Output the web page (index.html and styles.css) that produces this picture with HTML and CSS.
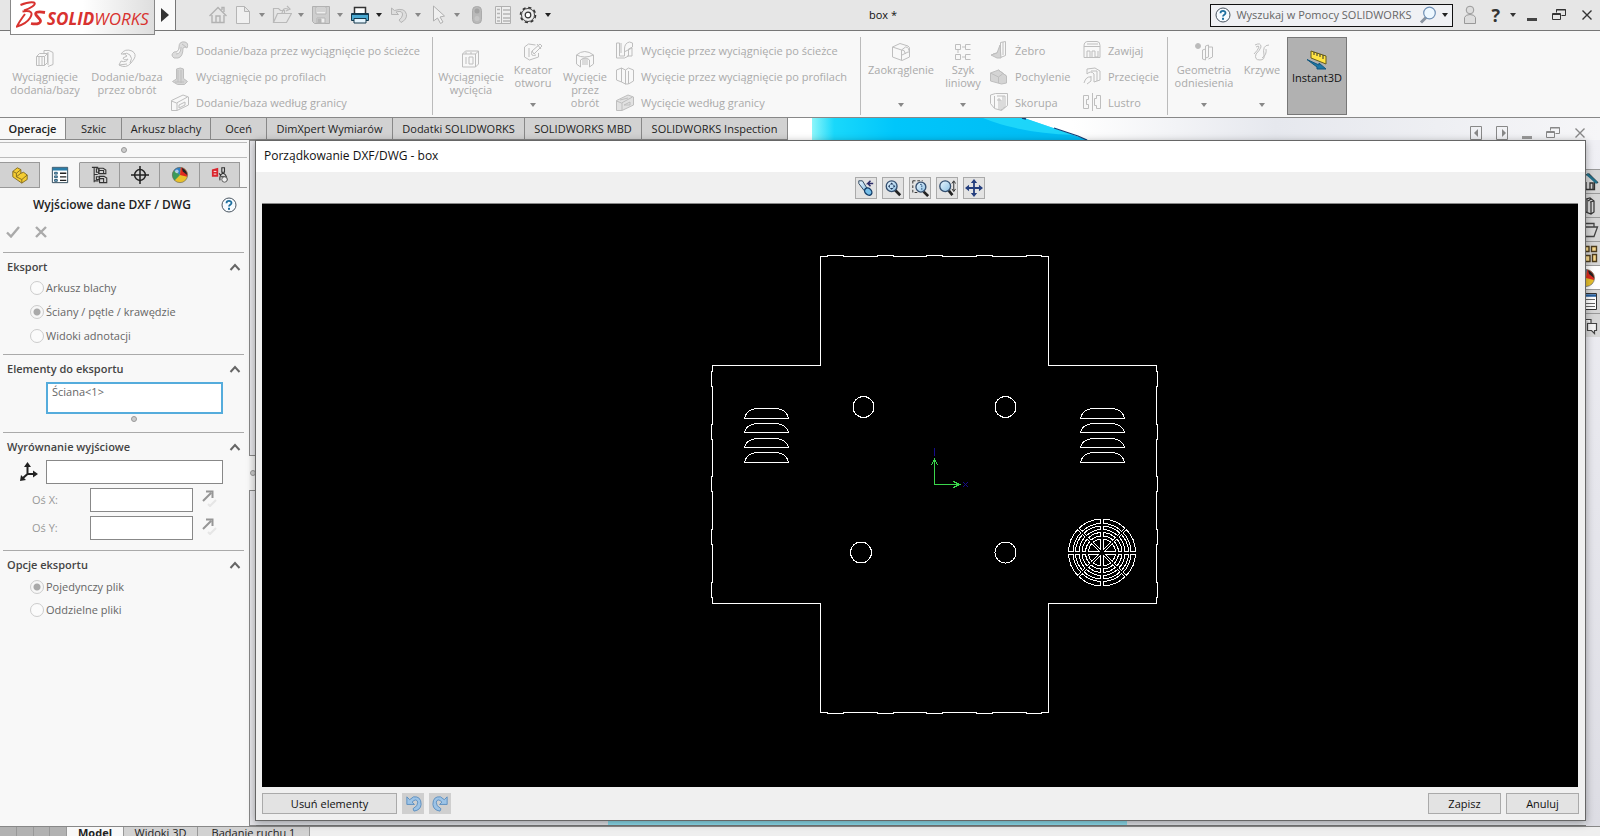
FILE: index.html
```html
<!DOCTYPE html>
<html lang="pl">
<head>
<meta charset="utf-8">
<title>SOLIDWORKS - box</title>
<link rel="stylesheet" href="styles.css">
</head>
<body>
<svg class="defs" aria-hidden="true">
  <defs>
    <linearGradient id="steel" x1="0" y1="0" x2="1" y2="1"><stop offset="0" stop-color="#eaf6ff"/><stop offset="1" stop-color="#8cc0e4"/></linearGradient>
    <symbol id="caret" viewBox="0 0 6 4"><path d="M0 0h6L3 4z" fill="currentColor"/></symbol>
    <symbol id="chevron" viewBox="0 0 12 8"><path d="M1.500 7L6 2l4.500 5" fill="none" stroke="#666" stroke-width="2"/></symbol>
    <symbol id="help" viewBox="0 0 16 16"><circle cx="8" cy="8" r="7" fill="#f6fbff" stroke="#4a5560"/><path d="M5.500 6.200C5.500 3.200 10.600 3.200 10.500 6c0 1.800-2.500 1.800-2.500 3.600" fill="none" stroke="#1d6f9f" stroke-width="1.800"/><rect x="7" y="10.800" width="2" height="2" fill="#1d6f9f"/></symbol>
    <symbol id="restore" viewBox="0 0 14 12"><path d="M4.500 3.500v-3h9v6h-4M4 1h10" fill="none" stroke="currentColor"/><path d="M.5 4.500h8v6h-8zM.5 5.500h8" fill="none" stroke="currentColor"/></symbol>
    <symbol id="cross" viewBox="0 0 12 12"><path d="M1.500 1.500l9 9M10.500 1.500l-9 9" fill="none" stroke="currentColor" stroke-width="1.400"/></symbol>
    <symbol id="sphere" viewBox="0 0 20 20"><circle cx="10" cy="10" r="8.500" fill="#e8c12c"/><path d="M10 10L4 16A8.500 8.500 0 0 1 3 5z" fill="#3b9a5a"/><path d="M10 10L3 5a8.500 8.500 0 0 1 8-3.500z" fill="#2d7ec4"/><path d="M10 10l1-8.500A8.500 8.500 0 0 1 18 12z" fill="#e02a20"/><path d="M12 2q6 3 6 8l-5-4z" fill="#222"/><circle cx="10" cy="10" r="8.500" fill="none" stroke="#666" stroke-width=".7"/><circle cx="6.500" cy="6" r="2" fill="#fff" opacity=".6"/></symbol>
    <symbol id="flip" viewBox="0 0 16 18"><path d="M1 12L9 4M4 2.500h6.500V9" fill="none" stroke="#969696" stroke-width="2"/><path d="M6 15l2 2 6-6" fill="none" stroke="#e6e6e6" stroke-width="2"/></symbol>
  </defs>
</svg>

<header class="titlebar">
  <div class="logo">
    <svg width="30" height="28" viewBox="0 0 30 28" aria-hidden="true"><path d="M4.500 4Q13 .500 18 1.500C21 3.500 14 7.500 8 9.500M6.500 10.500C15 9 17.500 11.500 14 17 11.500 21 6 24 1 25.500 3 21 6 17 9 13" fill="none" stroke="#d8322f" stroke-width="2"/><path d="M29 11.500c-8-1.500-11 0-8.500 3l3.500 4c2 3-2 5.500-9 4" fill="none" stroke="#d8322f" stroke-width="2.800"/></svg>
    <span class="word"><b>SOLID</b>WORKS</span>
  </div>
  <button class="expand" aria-label="Menu"><svg width="8" height="14" viewBox="0 0 8 14"><path d="M0 0l8 7-8 7z" fill="#333"/></svg></button>
  <nav class="quick" aria-label="Szybki dostęp">
    <button class="q home" aria-label="Strona główna"><svg width="20" height="20" viewBox="0 0 20 20"><path d="M1.500 11L10 2.500l8.500 8.500M4 10v7.500h12V10M8 17.500V11h4v6.500M14 5V2.500h2V7" fill="none" stroke="#b2b2b2" stroke-width="1.400"/></svg></button>
    <button class="q drop" aria-label="Nowy"><svg width="20" height="20" viewBox="0 0 20 20"><path d="M3.500 1.500h8l5 5v12h-13zM11.500 1.500v5h5" fill="#f0f0f0" stroke="#b5b5b5"/></svg><svg class="caret" aria-hidden="true"><use href="#caret"/></svg></button>
    <button class="q drop" aria-label="Otwórz"><svg width="20" height="20" viewBox="0 0 20 20"><path d="M1.500 17V3.500h5l2 2h4v3M1.500 17.500l4-9h14l-5 9zM10 8q1-6 6-4M15 1l3 3-4 2" fill="none" stroke="#b9b9b9" stroke-width="1.200"/></svg><svg class="caret" aria-hidden="true"><use href="#caret"/></svg></button>
    <button class="q drop" aria-label="Zapisz dokument"><svg width="20" height="20" viewBox="0 0 20 20"><path d="M1.500 1.500h17v17h-15l-2-2z" fill="#cecece" stroke="#b0b0b0"/><path d="M5 2h10v7H5zM6 13h8v5H6z" fill="#eee" stroke="#b5b5b5"/><path d="M6 4h8M6 6h8M7 14h3v4H7z" stroke="#b5b5b5" fill="#b5b5b5"/></svg><svg class="caret" aria-hidden="true"><use href="#caret"/></svg></button>
    <button class="q drop on" aria-label="Drukuj"><svg width="20" height="20" viewBox="0 0 20 20"><path d="M4.500 8V2.500h11V8" fill="#fff" stroke="#333" stroke-width="1.500"/><path d="M1.500 8.500h17v7h-17z" fill="#4aa9d1" stroke="#14394c"/><path d="M4 13.500h12v4.500H4z" fill="#e5f4fc" stroke="#14394c"/><path d="M2 9.500h16" stroke="#123f59"/></svg><svg class="caret" aria-hidden="true"><use href="#caret"/></svg></button>
    <button class="q drop" aria-label="Cofnij"><svg width="20" height="20" viewBox="0 0 20 20"><path d="M2.500 3v6.500h7L7 7q7-2 6.500 3-.5 3-3.500 5l2 2.500q6-3 5.500-8Q16 2 5.500 5.500z" fill="#ddd" stroke="#b5b5b5"/></svg><svg class="caret" aria-hidden="true"><use href="#caret"/></svg></button>
    <button class="q drop" aria-label="Wybierz"><svg width="20" height="20" viewBox="0 0 20 20"><path d="M5.500 1v15l4-3 3 5.500 2.500-1.500-3-5 4.500-1z" fill="#f0f0f0" stroke="#b0b0b0"/></svg><svg class="caret" aria-hidden="true"><use href="#caret"/></svg></button>
    <button class="q" aria-label="Przebuduj"><svg width="20" height="20" viewBox="0 0 20 20"><rect x="5.500" y="1.500" width="9" height="17" rx="4" fill="#b9b9b9" stroke="#ababab"/><circle cx="10" cy="6" r="2.500" fill="#a2a2a2"/><circle cx="10" cy="13.500" r="2.500" fill="#c6c6c6"/></svg></button>
    <button class="q list" aria-label="Właściwości pliku"><svg width="20" height="20" viewBox="0 0 20 20"><path d="M2.500 1.500h15v17h-15zM8.500 2v16" fill="#eee" stroke="#b0b0b0"/><path d="M4 4.500h3M4 8.500h3M4 12.500h3M4 16h3M10 5h7M10 9h7M10 13h7M10 16h7" stroke="#b5b5b5" stroke-width="1.500"/></svg></button>
    <button class="q drop on gear" aria-label="Opcje"><svg width="20" height="20" viewBox="0 0 20 20"><circle cx="10" cy="10" r="7.500" fill="none" stroke="#333" stroke-width="1.600" stroke-dasharray="3.200 2.690"/><circle cx="10" cy="10" r="6.500" fill="#eee" stroke="#444"/><circle cx="10" cy="10" r="2.800" fill="#fff" stroke="#333" stroke-width="1.200"/></svg><svg class="caret" aria-hidden="true"><use href="#caret"/></svg></button>
  </nav>
  <span class="doc">box *</span>
  <div class="search">
    <svg width="16" height="16" aria-hidden="true"><use href="#help"/></svg>
    <input type="text" placeholder="Wyszukaj w Pomocy SOLIDWORKS" aria-label="Wyszukaj w Pomocy SOLIDWORKS">
    <button aria-label="Szukaj"><svg width="18" height="18" viewBox="0 0 18 18"><path d="M7.500 11L2 16.500" stroke="#8a94a0" stroke-width="3"/><circle cx="10.500" cy="7" r="5.800" fill="#eef8ff" stroke="#6f90b5" stroke-width="1.200"/></svg></button>
    <svg class="caret dark" aria-hidden="true"><use href="#caret"/></svg>
  </div>
  <div class="winctl">
    <button aria-label="Logowanie"><svg width="14" height="20" viewBox="0 0 14 20"><circle cx="7" cy="5" r="3.800" fill="#ddd" stroke="#999"/><path d="M1.500 18.500v-6q1-3 5.500-3t5.500 3v6z" fill="#ddd" stroke="#999"/></svg></button>
    <button class="qm" aria-label="Pomoc">?<svg class="caret" aria-hidden="true"><use href="#caret"/></svg></button>
    <button aria-label="Minimalizuj"><svg width="10" height="12" viewBox="0 0 10 12"><path d="M0 10.500h10" stroke="#444" stroke-width="3"/></svg></button>
    <button aria-label="Przywróć"><svg width="14" height="12"><use href="#restore"/></svg></button>
    <button aria-label="Zamknij"><svg width="12" height="12"><use href="#cross"/></svg></button>
  </div>
</header>

<section class="ribbon" aria-label="Wstążka">
  <div class="group g1">
    <button class="big w84 low"><svg viewBox="0 0 20 20"><path d="M1.500 7.500h8v9h-8zM9.500 7.500l3-3v9l-3 3M1.500 7.500l3-3h8M9 4.500V1.500h5l4 2v12l-5 2M13 3v13M4 8v8M7 8v8"/></svg><span>Wyciągnięcie<br>dodania/bazy</span></button>
    <button class="big w80 low"><svg viewBox="0 0 20 20"><path d="M4 5q4-6 11-3 5 3 2 8l-3 4q-5 6-12 2l2-4q5 2 7-2-4 2-5-1l4-2q-2-3-6-2M6 5q4-2 7 1t0 8M2 16l8-1"/></svg><span>Dodanie/baza<br>przez obrót</span></button>
    <div class="stack s1">
      <button><svg viewBox="0 0 20 20"><path d="M4 18q-4-3 0-6 5 0 5-5Q9 1 15 2q4 1 2 6-2-2-4 0 0 9-5 10zM6 14q5 0 5-7M12 4l4 3" fill="#dcdcdc"/></svg>Dodanie/baza przez wyciągnięcie po ścieżce</button>
      <button><svg viewBox="0 0 20 20"><path d="M6.500 3v10l-4 2.500 5 3h7l3-3-4-3V3q-3-2-7 0z" fill="#d4d4d4"/><path d="M8 4v12M11 4v13M5 16h9"/></svg>Wyciągnięcie po profilach</button>
      <button><svg viewBox="0 0 20 20"><path d="M1.500 8.500L13 3l5.500 2v8L7 18.500H1.500zM1.500 9l5 2 11-6M7 11v7M9 13l6-3v3l-6 3z"/></svg>Dodanie/baza według granicy</button>
    </div>
  </div>
  <div class="group g2">
    <button class="big w76 low"><svg viewBox="0 0 20 20"><path d="M1.500 5l3-3h13v13l-3 3h-13zM1.500 5h13v13M14.500 5l3-3M5 8v7M8 8h4v7H8zM5 3v2M10 3v2"/></svg><span>Wyciągnięcie<br>wycięcia</span></button>
    <button class="big w48"><svg viewBox="0 0 20 20"><path d="M1.500 5l4-3 7 1M1.500 5v10l5 3 9-3v-4M6 6v9M9 9l8-7 2 2-8 8zM9 9q-2 6 4 4M14 2l4 5"/></svg><span>Kreator<br>otworu</span><svg class="caret" aria-hidden="true"><use href="#caret"/></svg></button>
    <button class="big w56 low"><svg viewBox="0 0 20 20"><path d="M1.500 6q8-7 17 0v9l-4 3v-7q-4-4-9 0v7l-4-3zM1.500 6q8 4 17 0M8 10v6M12 10v6M10 9v7"/></svg><span>Wycięcie<br>przez<br>obrót</span></button>
    <div class="stack s2">
      <button><svg viewBox="0 0 20 20"><path d="M1.500 3h3v13h5V9q0-6 5-7l3 1v4l-4 2v7l-4 2h-8zM6 3v10M9 12l8-4v8h-5"/></svg>Wycięcie przez wyciągnięcie po ścieżce</button>
      <button><svg viewBox="0 0 20 20"><path d="M1.500 4l5-2 4 2 3-2 5 2v11l-5 3V5M6.500 2v14l-5-2V4M6.500 16l4 2V4M13 18h-3"/></svg>Wycięcie przez wyciągnięcie po profilach</button>
      <button><svg viewBox="0 0 20 20"><path d="M1.500 8.500L13 3l5.500 2v8L7 18.500H1.500z" fill="#e2e2e2"/><path d="M1.500 9l5 2 11-6M7 11v7M9 13l6-3v3zM5 8l8-2"/></svg>Wycięcie według granicy</button>
    </div>
  </div>
  <div class="group g3">
    <button class="big w80"><svg viewBox="0 0 20 20"><path d="M1.500 5L9 1.500l8 2.500q2 1 1.500 4v7L11 18.500 1.500 15zM1.500 5l9 3v10M10.500 8l4-3q4 0 3.500 6M11 13l6-3M10.500 8q3-1 4 4"/></svg><span>Zaokrąglenie</span><svg class="caret" aria-hidden="true"><use href="#caret"/></svg></button>
    <button class="big w44"><svg viewBox="0 0 20 20"><path d="M2.500 2.500h5v5h-5zM12.500 2.500h5M17.500 7.500h-5v-5M2.500 12.500h5v5h-5zM17.500 17.500h-5v-5h5M9 5h3M9 15h3M5 8v3"/></svg><span>Szyk<br>liniowy</span><svg class="caret" aria-hidden="true"><use href="#caret"/></svg></button>
    <div class="stack s3">
      <button><svg viewBox="0 0 20 20"><path d="M11.500 2.500l5-1v14l-5 2zM14 2v13M4 14l7-2"/><path d="M11 5l-3 8-6 2 6 3h4z" fill="#d4d4d4"/></svg>Żebro</button>
      <button><svg viewBox="0 0 20 20"><path d="M1.500 7l8-3 8 6v7l-5 1-11-3z" fill="#d4d4d4"/><path d="M1.500 7l8 4v6M9.500 11l4-3M9.500 4l8 6"/></svg>Pochylenie</button>
      <button><svg viewBox="0 0 20 20"><path d="M1.500 3l5-1.500h12v12l-6 5-7-2-4-5zM5.500 4v12M8 4h8v11l-4 3V8H8M10 6v12M14 4v12"/></svg>Skorupa</button>
    </div>
    <div class="stack s4">
      <button><svg viewBox="0 0 20 20"><path d="M2 6q0-4.500 4-4.500h9q3 0 3 4v12H2zM2 6.500h16M5 17v-6h3v6M10 17v-6h3v6h3v-6M5 4h11"/></svg>Zawijaj</button>
      <button><svg viewBox="0 0 20 20"><path d="M5 8V3l8-1 5 3v9l-6 2V8q-3-4-7 0zM2 17q2-7 7-6M5 18l4-3v-5M9 5h6v10"/></svg>Przecięcie</button>
      <button><svg viewBox="0 0 20 20"><path d="M10.500 1v18M1.500 3.500h5v4M1.500 3.500v13h5v-4h-2v-5h2M18.500 3.500h-4v3h-2v7h2v3h4z"/></svg>Lustro</button>
    </div>
  </div>
  <div class="group g4">
    <button class="big w72"><svg viewBox="0 0 20 20"><circle cx="4" cy="4" r="2.500" fill="#bbb"/><path d="M8.500 8v9l3 1V7zM11.500 4v12l3-1V3zM14.500 5h4v10l-4 2"/></svg><span>Geometria<br>odniesienia</span><svg class="caret" aria-hidden="true"><use href="#caret"/></svg></button>
    <button class="big w44"><svg viewBox="0 0 20 20"><path d="M3 3q6-3 6 2-1 3-5 7-2 6 4 6 5 0 4-5Q10 3 17 3M4 5q3-2 3 0-1 3-5 7M10 16q5-3 4-9"/></svg><span>Krzywe</span><svg class="caret" aria-hidden="true"><use href="#caret"/></svg></button>
    <button class="big instant low" aria-pressed="true"><svg class="color" viewBox="0 0 22 20"><path d="M5 1l15 5v8L5 8z" fill="#ffe443" stroke="#665d18"/><path d="M8 2v3M11 3v3M14 4v3M17 5v4" stroke="#333"/><path d="M1 9.500l12 5.500v-2l7 6-9 0v-2z" fill="#1c77a6" stroke="#12577f"/></svg><span>Instant3D</span></button>
  </div>
</section>

<div class="tabrow">
  <nav class="tabs" aria-label="Karty">
    <button class="active t1">Operacje</button><button class="t2">Szkic</button><button class="t3">Arkusz blachy</button><button class="t2">Oceń</button><button class="t4">DimXpert Wymiarów</button><button class="t5">Dodatki SOLIDWORKS</button><button class="t6">SOLIDWORKS MBD</button><button class="t7">SOLIDWORKS Inspection</button>
  </nav>
  <div class="modelstrip">
    <svg class="modeledge" width="300" height="22" viewBox="0 0 300 22" aria-hidden="true"><defs><linearGradient id="cy"><stop offset="0" stop-color="#8df6fa"/><stop offset=".08" stop-color="#19d8fb"/><stop offset=".3" stop-color="#00c6fb"/><stop offset="1" stop-color="#00b9f2"/></linearGradient></defs><path d="M24 0h212l64 22H24z" fill="url(#cy)"/><path d="M195 0h41l50 17q-55-2-91-17z" fill="#29dffc" opacity=".7"/><path d="M234 0l4 1M266 10l24 8M290 18l9 4" stroke="#123f78" fill="none" stroke-width="1.300"/></svg>
    <div class="docctl">
      <button aria-label="Poprzednie okno"><svg width="12" height="14" viewBox="0 0 12 14"><path d="M.5.500h11v13H.5z" fill="none" stroke="#888"/><path d="M8 3v8L4 7z" fill="#888"/></svg></button>
      <button aria-label="Następne okno"><svg width="12" height="14" viewBox="0 0 12 14"><path d="M.5.500h11v13H.5z" fill="none" stroke="#888"/><path d="M6 3v8l4-4z" fill="#888"/></svg></button>
      <button aria-label="Minimalizuj dokument"><svg width="10" height="12" viewBox="0 0 10 12"><path d="M0 10.500h10" stroke="#999" stroke-width="3"/></svg></button>
      <button aria-label="Przywróć dokument"><svg width="14" height="12"><use href="#restore"/></svg></button>
      <button aria-label="Zamknij dokument"><svg width="12" height="12"><use href="#cross"/></svg></button>
    </div>
  </div>
</div>

<main class="work">
  <aside class="panel">
    <div class="grip"><i></i></div>
    <nav class="ptabs" aria-label="Menedżer">
      <button aria-label="Drzewo operacji"><svg viewBox="0 0 20 20"><path d="M2 6l5-4 4 2v4l3-1 4 3v5l-6 4-10-7z" fill="#f5cd32" stroke="#7f681d"/><path d="M2 6l4 2v4l6 3v4M6 8l5-4M12 15l6-5M11 8l-5 4" fill="none" stroke="#7f681d"/></svg></button>
      <button class="active" aria-label="Menedżer właściwości"><svg viewBox="0 0 20 20"><path d="M1.500 1.500h17v17h-17z" fill="#fff" stroke="#1f3d50"/><path d="M2 3.500h16" stroke="#2b7da8" stroke-width="3"/><path d="M4 7h3v2H4zM4 11h3v2H4zM4 15h3v2H4z" fill="#7fb5d2" stroke="#285570"/><path d="M10 8h7M10 12h7M10 16h7" stroke="#222" stroke-width="1.500"/></svg></button>
      <button aria-label="Konfiguracje"><svg viewBox="0 0 20 20"><path d="M3.500 1v17M1 1.500h7M3.500 9.500h4M3.500 16.500h5M8.500 2.500h5l3 2v4h-8zM9.500 11.500h5l3 2v5h-8zM9 5h5v4M10 14h4v4M6 3h3v4H6zM6 12h3v3H6z" fill="none" stroke="#333" stroke-width="1.200"/></svg></button>
      <button aria-label="DimXpert"><svg viewBox="0 0 20 20"><circle cx="10" cy="10" r="6" fill="none" stroke="#222" stroke-width="1.700"/><path d="M10 0v20M0 10h20" stroke="#222" stroke-width="1.700"/></svg></button>
      <button aria-label="Wyglądy"><svg viewBox="0 0 20 20"><use href="#sphere"/></svg></button>
      <button aria-label="Inspekcja"><svg viewBox="0 0 20 20"><path d="M1 4l7-2v10H1z" fill="#d9252d"/><path d="M3 6h3M3 9h3" stroke="#fff"/><path d="M12 2h3v5h-3zM10 16q-1-6 3-8 4 0 5 8M11 12h5M9 8l2 3" fill="none" stroke="#333" stroke-width="1.200"/><circle cx="15" cy="15" r="3" fill="#eee" stroke="#555"/></svg></button>
    </nav>
    <div class="ptitle"><h1>Wyjściowe dane DXF / DWG</h1><button aria-label="Pomoc"><svg width="16" height="16"><use href="#help"/></svg></button></div>
    <div class="confirm">
      <button aria-label="OK"><svg width="14" height="12" viewBox="0 0 14 12"><path d="M1 6.500l4 4L13 1" fill="none" stroke="#aaa" stroke-width="2.400"/></svg></button>
      <button aria-label="Anuluj operację"><svg width="12" height="12" viewBox="0 0 12 12"><path d="M1 1l10 10M11 1L1 11" stroke="#aaa" stroke-width="2.400"/></svg></button>
    </div>
    <section class="sec export">
      <h2>Eksport <svg width="12" height="8" aria-hidden="true"><use href="#chevron"/></svg></h2>
      <label><input type="radio" name="export" disabled>Arkusz blachy</label>
      <label><input type="radio" name="export" checked disabled>Ściany / pętle / krawędzie</label>
      <label><input type="radio" name="export" disabled>Widoki adnotacji</label>
    </section>
    <section class="sec items">
      <h2>Elementy do eksportu <svg width="12" height="8" aria-hidden="true"><use href="#chevron"/></svg></h2>
      <textarea rows="1" aria-label="Elementy do eksportu">Ściana&lt;1&gt;</textarea>
      <div class="dot"><i></i></div>
    </section>
    <section class="sec align">
      <h2>Wyrównanie wyjściowe <svg width="12" height="8" aria-hidden="true"><use href="#chevron"/></svg></h2>
      <div class="origin"><svg width="18" height="20" viewBox="0 0 18 20" aria-hidden="true"><path d="M7.500 4v8L3 16M7.500 12H14" fill="none" stroke="#222" stroke-width="2"/><path d="M7.500 0l3.500 5H4zM18 12l-5 3.500v-7zM0 19l1-6 5 5z" fill="#222"/></svg><input type="text" aria-label="Układ współrzędnych"></div>
      <div class="axis"><label for="ox">Oś X:</label><input id="ox" type="text"><button aria-label="Odwróć oś X"><svg width="16" height="18"><use href="#flip"/></svg></button></div>
      <div class="axis"><label for="oy">Oś Y:</label><input id="oy" type="text"><button aria-label="Odwróć oś Y"><svg width="16" height="18"><use href="#flip"/></svg></button></div>
    </section>
    <section class="sec options">
      <h2>Opcje eksportu <svg width="12" height="8" aria-hidden="true"><use href="#chevron"/></svg></h2>
      <label><input type="radio" name="files" checked disabled>Pojedynczy plik</label>
      <label><input type="radio" name="files" disabled>Oddzielne pliki</label>
    </section>
  </aside>
  <div class="splitter"><div class="bar top"></div><i></i><div class="bar bottom"></div></div>
  <div class="viewport"><div class="cyanfoot"></div></div>
  <nav class="taskpane" aria-label="Okienko zadań">
    <button aria-label="Zasoby"><svg viewBox="0 0 14 20"><path d="M0 3l3-1 9 9M0 10v7.500h8.500V9M4 17v-6h3v6" fill="none" stroke="#333" stroke-width="1.300"/><path d="M1 2l10 9" stroke="#23708a" stroke-width="2.500"/></svg></button>
    <button aria-label="Biblioteka projektu"><svg viewBox="0 0 14 20"><path d="M0 3l4-1 4 3v11l-3 2-5-2M5 6v12M1 3v14M2 5l3-2M4 6l4-1" fill="none" stroke="#333" stroke-width="1.200"/></svg></button>
    <button aria-label="Eksplorator plików"><svg viewBox="0 0 14 20"><path d="M0 3.500h8v3M0 7h11.500L8 16.500H0M8 4v3" fill="none" stroke="#444" stroke-width="1.300"/></svg></button>
    <button aria-label="Paleta widoków"><svg viewBox="0 0 14 20"><path d="M-1 2.500H3v5h-4zM5.500 2.500h5v5h-5zM-1 11.500h5v6h-5zM6.500 10.500h4v7h-4z" fill="#f5d68b" stroke="#4c3c1d" stroke-width="1.400"/></svg></button>
    <button class="active" aria-label="Wyglądy, sceny i kalkomanie"><svg viewBox="0 0 14 20"><use href="#sphere" x="-10" width="20" height="20"/></svg></button>
    <button aria-label="Właściwości niestandardowe"><svg viewBox="0 0 14 20"><path d="M-1 1.500h11.500v16H-1z" fill="#fff" stroke="#333"/><path d="M0 3.500h10" stroke="#245e9e" stroke-width="2.500"/><path d="M0 7.500h9M0 11.500h9M0 14.500h9" stroke="#666"/></svg></button>
    <button aria-label="Forum"><svg viewBox="0 0 14 20"><path d="M-1 3.500h6v4M1.500 7.500h9v7h-2v3l-3-3h-4z" fill="#f5f5f5" stroke="#444" stroke-width="1.200"/></svg></button>
  </nav>
</main>

<footer class="modeltabs">
  <div class="navarrows"><button aria-label="Pierwsza"></button><button aria-label="Poprzednia"></button><button aria-label="Następna"></button><button aria-label="Ostatnia"></button></div>
  <button class="active">Model</button><button class="v">Widoki 3D</button><button class="r">Badanie ruchu 1</button>
</footer>

<div class="dialog" role="dialog" aria-labelledby="dlg">
  <h2 id="dlg">Porządkowanie DXF/DWG - box</h2>
  <div class="dtools">
    <button aria-label="Odśwież"><svg viewBox="0 0 20 20"><path d="M2 2l4 0 5 8-3 3-6-8z" fill="url(#steel)" stroke="#223b55"/><ellipse cx="12.500" cy="14" rx="4.500" ry="3.500" transform="rotate(45 12.500 14)" fill="#76bee8" stroke="#123c68" stroke-width="1.500"/><path d="M18 5h-6l3-3M12 5l3 3" stroke="#2d2d69" stroke-width="1.700" fill="none"/></svg></button>
    <button aria-label="Dopasuj"><svg viewBox="0 0 20 20"><path d="M12 12l6 6" stroke="#222" stroke-width="3"/><circle cx="8.500" cy="8" r="6" fill="url(#steel)" stroke="#344f70" stroke-width="1.500"/><path d="M8.500 4l2 2h-4zM8.500 12l2-2h-4zM4.500 8l2-2v4zM12.500 8l-2-2v4z" fill="#1d3558"/></svg></button>
    <button aria-label="Powiększ obszar"><svg viewBox="0 0 20 20"><path d="M2 2h11M2 2v13h5" stroke="#222" stroke-dasharray="3 2" fill="none"/><path d="M14 14l5 5" stroke="#222" stroke-width="3"/><circle cx="11" cy="9" r="5.500" fill="url(#steel)" stroke="#344f70" stroke-width="1.500"/><path d="M10 6h2v6" fill="none" stroke="#28507a" stroke-dasharray="2 1"/></svg></button>
    <button aria-label="Powiększ/pomniejsz"><svg viewBox="0 0 20 20"><path d="M12 13l4 5" stroke="#222" stroke-width="3"/><circle cx="8" cy="8" r="6" fill="url(#steel)" stroke="#344f70" stroke-width="1.500"/><path d="M17.500 3v10M15.500 5l2-3 2 3M15.500 11l2 3 2-3" stroke="#222" fill="none"/></svg></button>
    <button aria-label="Przesuń"><svg viewBox="0 0 20 20"><path d="M10 3v14M3 10h14" stroke="#243e7e" stroke-width="2"/><path d="M10 0l3.500 4.500h-7zM10 20l3.500-4.500h-7zM0 10l4.500-3.500v7zM20 10l-4.500-3.500v7z" fill="#243e7e"/></svg></button>
  </div>
  <svg class="drawing" viewBox="262 204 1316 583" role="img" aria-label="Rozwinięcie pudełka">
    <g fill="none" stroke="#fff" shape-rendering="crispEdges">
      <path d="M820.500 256.500h7v-1h16v1h34v-1h16v1h33v-1h16v1h34v-1h16v1h34v-1h15v1h7v109h108v6h1v15h-1v38h1v15h-1v37h1v15h-1v38h1v15h-1v38h1v15h-1v6h-108v109h-7v1h-15v-1h-34v1h-16v-1h-34v1h-16v-1h-33v1h-16v-1h-34v1h-16v-1h-7v-109h-108v-6h-1v-15h1v-38h-1v-15h1v-38h-1v-15h1v-37h-1v-15h1v-38h-1v-15h1v-6h108z"/>
      <circle cx="863.500" cy="407" r="10.500"/><circle cx="1005.500" cy="407" r="10.500"/><circle cx="861" cy="552.500" r="10.500"/><circle cx="1005.500" cy="552.500" r="10.500"/>
      <path id="louvre" d="M744.500 418.500h44q-2-10-14-10h-16q-12 0-14 10zM744.500 432.500h44q-2-9-14-9h-16q-12 0-14 9zM744.500 447.500h44q-2-9-14-9h-16q-12 0-14 9zM744.500 462.500h44q-2-10-14-10h-16q-12 0-14 10z"/>
      <use href="#louvre" x="336"/>
      <g><path d="M1102 519v67M1068 552.500h67" stroke-width="4"/><path d="M1078 528.500l48 48M1126 528.500l-48 48" stroke-width="3"/>
      <g stroke="#000" stroke-width="2"><circle cx="1102" cy="552.500" r="28"/><circle cx="1102" cy="552.500" r="21.500"/><circle cx="1102" cy="552.500" r="15"/></g>
      <circle cx="1102" cy="552.500" r="33.500"/><circle cx="1102" cy="552.500" r="29"/><circle cx="1102" cy="552.500" r="26.500"/><circle cx="1102" cy="552.500" r="23"/><circle cx="1102" cy="552.500" r="20"/><circle cx="1102" cy="552.500" r="16.500"/><circle cx="1102" cy="552.500" r="13.500"/>
      <path d="M1102 518v69M1067 552.500h70" stroke="#000" stroke-width="2"/><path d="M1078 528.500l48 48M1126 528.500l-48 48" stroke="#000"/></g>
      <path d="M934.500 459v25.500H959M931.500 465l3-6 3 6M953.500 481.500l6 3-6 3" stroke="#3bd54c"/>
      <path d="M934.500 448v8M963 482l5 5M968 482l-5 5" stroke="#150c8a"/>
    </g>
  </svg>
  <div class="dfoot">
    <button class="btn wide">Usuń elementy</button>
    <button class="ico" aria-label="Cofnij"><svg viewBox="0 0 20 20"><path d="M3 3v8h8L8.500 8.500Q13 4 14.500 8.500q.5 4-5 7l1 2.500q7-1 7.500-7Q18 2 10 3L6 6z" fill="#9cc3e6" stroke="#5d8fc0"/></svg></button>
    <button class="ico" aria-label="Ponów"><svg viewBox="0 0 20 20"><path d="M17 3v8H9l2.500-2.500Q7 4 5.500 8.500q-.5 4 5 7l-1 2.500Q2.500 17 2 11 2 2 10 3l4 3z" fill="#9cc3e6" stroke="#5d8fc0"/></svg></button>
    <span class="grow"></span>
    <button class="btn">Zapisz</button>
    <button class="btn">Anuluj</button>
  </div>
</div>
</body>
</html>
```

FILE: styles.css
```css
* { box-sizing: border-box; }
html, body { height: 100%; margin: 0; }
body {
  display: flex;
  flex-direction: column;
  position: relative;
  overflow: hidden;
  background: #f7f7f7;
  color: #222;
  font-family: "Open Sans", "Noto Sans", sans-serif;
  font-size: 11px;
  line-height: 16px;
}
button, input, textarea { font: inherit; color: inherit; margin: 0; }
button { background: none; border: 0; padding: 0; display: flex; align-items: center; justify-content: center; white-space: nowrap; flex: none; }
svg { display: block; flex: none; }
.defs { position: absolute; width: 0; height: 0; }
.caret { width: 6px; height: 4px; color: #888; }
.caret.dark { color: #222; }

.titlebar {
  display: flex;
  align-items: center;
  flex: none;
  height: 31px;
  background: #e6e6e6;
  border-bottom: 1px solid #777;
}
.logo {
  display: flex;
  align-items: center;
  align-self: flex-start;
  width: 145px;
  height: 35px;
  margin-left: 10px;
  padding: 0 0 4px 5px;
  background: linear-gradient(90deg, #fff, #fff 50%, #dedede);
  border: 1px solid #888;
  border-top: 0;
  z-index: 1;
}
.word { color: #d8322f; font-size: 17px; font-style: italic; padding-top: 8px; margin-left: 1px; }
.word b { font-weight: 700; }
.expand { width: 21px; height: 30px; background: #fafafa; border-right: 1px solid #777; }
.quick { display: flex; align-items: center; margin-left: 32px; }
.q { width: 20px; height: 20px; }
.q.home { margin-right: 5px; }
.q.drop { width: 39px; gap: 6px; justify-content: flex-start; }
.q.drop.on .caret { color: #222; }
.q.list { margin: 0 5px 0 6px; }
.q.gear { gap: 7px; }
.doc { flex: 1; padding-left: 312px; color: #111; }
.search {
  display: flex;
  align-items: center;
  gap: 5px;
  width: 243px;
  height: 23px;
  padding: 0 4px;
  background: #f0f1f4;
  border: 1px solid #111;
}
.search input { flex: 1; min-width: 0; border: 0; padding: 0; background: none; }
.search input::placeholder { color: #666; opacity: 1; }
.winctl { display: flex; align-items: center; gap: 15px; padding: 0 7px 0 10px; color: #333; }
.winctl .qm { font-size: 18px; font-weight: 700; gap: 10px; margin: 0 -4px 0 -1px; }
.qm .caret { color: #333; }

.ribbon {
  display: flex;
  flex: none;
  height: 87px;
  padding: 6px 0 2px;
  background: #f8f8f8;
  border-bottom: 1px solid #888;
  color: #aaa;
  line-height: 13px;
}
.group { display: flex; flex: none; border-right: 1px solid #bbb; }
.g1 { width: 433px; padding-left: 3px; }
.g2 { width: 428px; }
.g3 { width: 307px; }
.g4 { border: 0; }
.big { flex-direction: column; justify-content: flex-start; padding-top: 5px; color: #aaa; }
.big svg:not(.caret) { width: 20px; height: 20px; margin-bottom: 1px; fill: none; stroke: #bebebe; }
.big.low { padding-top: 12px; }
.big .caret { margin-top: auto; margin-bottom: 8px; }
.big svg.color { width: 22px; }
.w84 { width: 84px; } .w80 { width: 80px; } .w76 { width: 76px; } .w72 { width: 72px; } .w56 { width: 56px; } .w48 { width: 48px; } .w44 { width: 44px; }
.stack { display: flex; flex: none; flex-direction: column; }
.stack button { height: 26px; justify-content: flex-start; gap: 6px; color: #aaa; }
.stack svg { width: 20px; height: 20px; fill: none; stroke: #bebebe; }
.s1 { margin-left: 3px; }
.s2 { margin-left: 2px; }
.s3 { width: 93px; margin-left: 4px; }
.ribbon .instant { width: 60px; height: 78px; margin-left: 3px; background: #b1b1b1; border: 1px solid #777; color: #111; }

.tabrow { display: flex; flex: none; height: 22px; }
.tabs { display: flex; }
.tabs button { background: #d2d2d2; border-right: 1px solid #888; border-bottom: 1px solid #888; color: #222; }
.tabs .active { background: #f8f8f8; font-weight: 600; }
.t1 { width: 66px; } .t2 { width: 56px; } .t3 { width: 89px; } .t4 { width: 126px; } .t5 { width: 132px; } .t6 { width: 117px; } .t7 { width: 146px; }
.modelstrip { display: flex; flex: 1; justify-content: space-between; background: linear-gradient(90deg, #fff 35%, #e6e8ee 60%, #f6f6f8); overflow: hidden; }
.docctl { display: flex; align-items: center; gap: 14px; padding: 8px 14px 0 0; color: #888; }

.work { display: flex; flex: 1; min-height: 0; }
.panel { width: 249px; background: #f8f8f8; overflow: hidden; }
.grip { display: flex; justify-content: center; align-items: center; height: 16px; margin: 2px 2px 4px 0; border: solid #bbb; border-width: 1px 0; }
.grip i, .dot i, .splitter i { width: 6px; height: 6px; border: 1px solid #999; border-radius: 50%; background: #ccc; }
.ptabs { display: flex; height: 26px; margin-right: 2px; border-bottom: 1px solid #999; }
.ptabs button { width: 40px; height: 26px; background: #d2d2d2; border: 1px solid #999; border-left: 0; }
.ptabs .active { background: #f8f8f8; border-color: #f8f8f8; border-right-color: #999; }
.ptabs svg { width: 18px; height: 18px; }
.ptitle { display: flex; align-items: center; height: 34px; padding: 0 12px 0 33px; justify-content: space-between; }
.ptitle h1 { margin: 0; font-size: 12px; font-weight: 600; line-height: 16px; color: #222; }
.confirm { display: flex; gap: 15px; height: 30px; padding: 4px 0 14px 6px; }
.sec { margin: 0 5px 0 3px; padding: 5px 3px 0 4px; border-top: 1px solid #aaa; color: #666; }
.sec h2 { display: flex; align-items: center; justify-content: space-between; margin: 0; height: 17px; font-size: 11px; line-height: 16px; font-weight: 600; color: #444; }
.sec label { display: flex; align-items: center; gap: 2px; padding-left: 23px; }
.sec input[type="radio"] { appearance: none; flex: none; width: 14px; height: 14px; border: 1px solid #ccc; border-radius: 50%; background: #fbfbfb; }
.sec input[type="radio"]:checked { background: radial-gradient(circle, #aaa 0 3px, #f7f7f7 4px); }
.export { height: 102px; }
.export label { height: 24px; }
.export h2 + label { margin-top: 1px; }
.items { height: 78px; }
.items textarea { display: block; width: 177px; height: 32px; margin: 5px 0 2px 39px; padding: 0 4px; border: 2px solid #55acdc; background: #fff; resize: none; overflow: hidden; outline: 0; line-height: 16px; }
.dot { display: flex; justify-content: center; padding-left: 20px; }
.align { height: 118px; }
.origin { display: flex; align-items: center; margin: 5px 0 4px 13px; gap: 8px; }
.align input { height: 24px; border: 1px solid #888; background: #fff; padding: 0 4px; }
.origin input { width: 177px; }
.axis { display: flex; align-items: center; margin-bottom: 4px; }
.axis label { width: 83px; padding-left: 25px; color: #999; }
.axis input { width: 103px; }
.axis button { margin-left: 9px; padding-bottom: 4px; }
.options label { height: 23px; }
.options h2 + label { margin-top: 2px; }
.splitter { display: flex; flex-direction: column; align-items: center; justify-content: space-between; width: 7px; background: #f4f4f4; }
.bar { width: 7px; background: #e6e6ea; border: 1px solid #888; border-right: 0; }
.bar.top { height: 46%; }
.bar.bottom { height: 49%; }
.viewport { display: flex; flex: 1; align-items: flex-end; background: #e4e6eb; border-bottom: 1px solid #777; }
.cyanfoot { width: 39%; height: 12px; margin-left: 26.5%; background: #8edff0; }
.taskpane { width: 14px; padding-top: 29px; background: linear-gradient(#f0f0f5, #dddde4); }
.taskpane button { width: 14px; height: 24px; background: #d6d6d6; border-top: 1px solid #999; }
.taskpane .active { background: #fff; }
.taskpane svg { width: 14px; height: 20px; }

.modeltabs { display: flex; flex: none; height: 10px; overflow: hidden; background: #efefef; border-top: 1px solid #888; }
.modeltabs button { height: 12px; background: #d2d2d2; border-right: 1px solid #999; color: #222; line-height: 12px; }
.modeltabs .active { width: 57px; background: #f8f8f8; font-weight: 700; }
.modeltabs .v { width: 74px; }
.modeltabs .r { width: 112px; }
.navarrows { display: flex; width: 67px; background: #aaa; }
.navarrows button { flex: 1; background: #b2b2b2; }

.dialog {
  position: absolute;
  inset: 140px 14px 15px 255px;
  display: flex;
  flex-direction: column;
  background: #f0f0f0;
  border: 1px solid #666;
  box-shadow: 0 2px 8px rgba(0, 0, 0, .35);
}
.dialog h2 { flex: none; margin: 0; padding: 7px 8px; height: 31px; background: #fff; font-size: 12px; font-weight: 400; line-height: 16px; color: #111; }
.dtools { display: flex; flex: none; justify-content: center; gap: 5px; height: 31px; padding: 5px 2px 0 0; }
.dtools button { width: 22px; height: 22px; background: #e3e3e3; border: 1px solid #aaa; }
.dtools svg { width: 18px; height: 18px; }
.drawing { flex: 1; min-height: 0; margin: 0 7px 0 6px; background: #000; border-top: 1px solid #888; }
.dfoot { display: flex; flex: none; gap: 5px; height: 33px; padding: 6px 6px 0; }
.btn { width: 73px; height: 21px; background: #e3e3e3; border: 1px solid #aaa; color: #111; }
.btn.wide { width: 135px; }
.ico { width: 22px; height: 21px; background: #cfcfcf; }
.ico svg { width: 19px; height: 19px; }
.grow { flex: 1; }
```
